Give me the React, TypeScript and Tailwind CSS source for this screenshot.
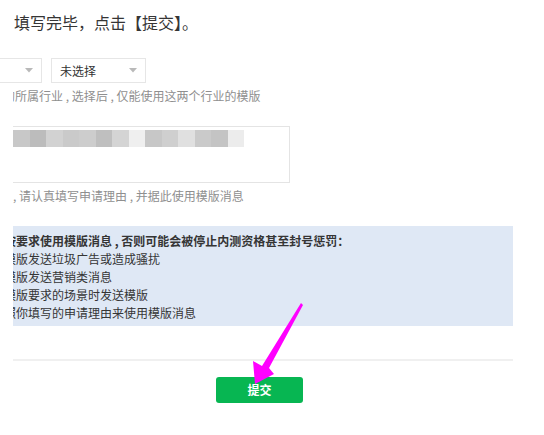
import React from "react";

const blocks = [
  "#c8c8c8", "#bcbcbc", "#d2d2d2", "#cacaca", "#cdcdcd", "#bfbfbf", "#d4d4d4",
  "#efefef", "#c7c7c7", "#cfcfcf", "#e0e0e0", "#cacaca", "#c4c4c4", "#ececec",
];

const rules = [
  "版发送垃圾广告或造成骚扰",
  "版发送营销类消息",
  "版要求的场景时发送模版",
  "你填写的申请理由来使用模版消息",
];

const Caret = () => (
  <svg width="8" height="5" viewBox="0 0 8 5" className="shrink-0">
    <path d="M0 0 L8 0 L4 4.5 Z" fill="#b9b9b9" />
  </svg>
);

export default function App() {
  return (
    <div
      className="relative w-[544px] h-[435px] overflow-hidden bg-white text-[#353535]"
      style={{ fontFamily: '"Noto Sans CJK SC", "Noto Sans", sans-serif' }}
    >
      <div className="pl-[14px] pt-[10px] text-[16px] leading-[24px]">填写完毕，点击【提交】。</div>

      {/* industry selects */}
      <div className="mt-[24px] flex gap-[9px] ml-[-8px]">
        <div className="flex h-[25px] w-[50px] items-center justify-end border border-[#e6e6e6] pr-[8px]">
          <Caret />
        </div>
        <div className="flex h-[25px] w-[95px] items-center justify-between border border-[#e6e6e6] pl-[8px] pr-[8px]">
          <span className="text-[12px] leading-none text-[#333]">未选择</span>
          <Caret />
        </div>
      </div>

      <div className="ml-[13px] mt-[4px] overflow-hidden whitespace-nowrap text-[12px] leading-[18px] text-[#8f8f8f]">
        <span className="ml-[-10px]">的所属行业 , 选择后 , 仅能使用这两个行业的模版</span>
      </div>

      {/* reason textarea (blurred) */}
      <div className="ml-[13px] mt-[21px] h-[57px] w-[277px] border-y border-r border-[#e4e4e4] pt-[3px]">
        <div className="flex">
          {blocks.map((c, i) => (
            <div key={i} className="h-[17px] w-[16.5px]" style={{ backgroundColor: c }} />
          ))}
        </div>
      </div>

      <div className="ml-[13px] mt-[4px] overflow-hidden whitespace-nowrap text-[12px] leading-[18px] text-[#8f8f8f]">
        <span>, 请认真填写申请理由 , 并据此使用模版消息</span>
      </div>

      {/* notice box */}
      <div className="ml-[13px] mt-[21px] h-[100px] w-[500px] overflow-hidden bg-[#dfe8f5] pt-[6px] text-[12px] leading-[18px] whitespace-nowrap">
        <div className="ml-[-9px] font-bold">按要求使用模版消息 , 否则可能会被停止内测资格甚至封号惩罚：</div>
        {rules.map((r, i) => (
          <div key={i} className="ml-[-9px]">
            {i === 3 ? "照" : "模"}
            {r}
          </div>
        ))}
      </div>

      <div className="ml-[13px] mt-[33px] h-[2px] w-[500px] bg-[#f0f0f0]" />

      <div className="ml-[216px] mt-[16px] flex h-[26px] w-[87px] items-center justify-center rounded-[3px] bg-[#07b652] text-[12px] font-bold text-white">
        提交
      </div>

      {/* annotation arrow */}
      <svg className="absolute left-0 top-0" width="544" height="435" viewBox="0 0 544 435">
        <polygon
          points="301,303 303,305 269,368 274,374 255,384 253,361 262,366"
          fill="#ff00ff"
        />
      </svg>
    </div>
  );
}
